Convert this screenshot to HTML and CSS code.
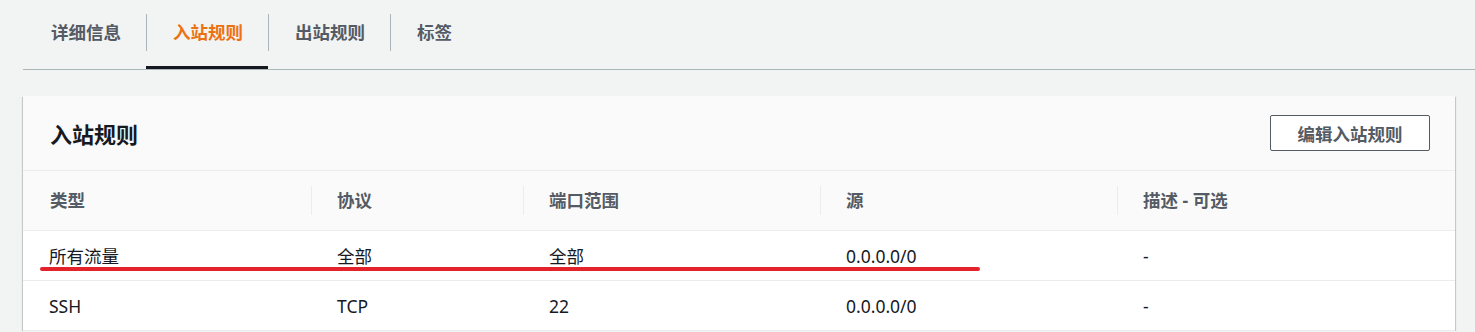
FILE: index.html
```html
<!DOCTYPE html>
<html lang="zh-CN">
<head>
    <meta charset="UTF-8">
    <meta name="viewport" content="width=device-width, initial-scale=1.0">
    <title>入站规则</title>
    <link rel="stylesheet" href="styles.css">
</head>
<body>
    <div class="tabs">
        <a class="tab"><span class="tab-label">详细信息</span></a>
        <a class="tab active"><span class="tab-label">入站规则</span></a>
        <a class="tab"><span class="tab-label">出站规则</span></a>
        <a class="tab"><span class="tab-label">标签</span></a>
    </div>

    <div class="card">
        <div class="card-header">
            <h2>入站规则</h2>
            <button type="button">编辑入站规则</button>
        </div>

        <table class="rules">
            <colgroup>
                <col style="width: 288px">
                <col style="width: 212px">
                <col style="width: 297px">
                <col style="width: 297px">
                <col>
            </colgroup>
            <thead>
                <tr>
                    <th><div class="th-inner first">类型</div></th>
                    <th><div class="th-inner">协议</div></th>
                    <th><div class="th-inner">端口范围</div></th>
                    <th><div class="th-inner">源</div></th>
                    <th><div class="th-inner">描述 - 可选</div></th>
                </tr>
            </thead>
            <tbody>
                <tr>
                    <td class="first">所有流量</td>
                    <td>全部</td>
                    <td>全部</td>
                    <td>0.0.0.0/0</td>
                    <td>-</td>
                </tr>
                <tr>
                    <td class="first">SSH</td>
                    <td>TCP</td>
                    <td>22</td>
                    <td>0.0.0.0/0</td>
                    <td>-</td>
                </tr>
            </tbody>
        </table>

        <!-- marca vermelha desenhada por cima da primeira linha -->
        <div class="mark"></div>
    </div>
</body>
</html>
```

FILE: styles.css
```css
body {
    font-family: "Noto Sans", "Noto Sans CJK SC", sans-serif;
    background-color: #f2f3f3;
    margin: 0;
    padding: 0 0 0 23px;
    color: #16191f;
    font-size: 17.5px;
}
.tabs {
    display: flex;
    padding-left: 3px;
    border-bottom: 1px solid #aab7b8;
}
.tab {
    display: block;
    box-sizing: border-box;
    height: 69px;
    padding-top: 14px;
    border-bottom: 3px solid transparent;
    color: #545b64;
    font-weight: bold;
    cursor: pointer;
}
.tab-label {
    display: block;
    height: 37px;
    line-height: 37px;
    padding: 0 25px 0 26px;
    border-left: 1px solid #aab7b8;
}
.tab:first-child .tab-label {
    border-left: none;
    padding-left: 25px;
}
.tab.active {
    color: #ec7211;
    border-bottom-color: #16191f;
}
.card {
    position: relative;
    margin: 26px 20px 0 0;
    background: #fff;
    box-shadow: 0 1px 1px 0 rgba(0, 28, 36, 0.3), 1px 1px 1px 0 rgba(0, 28, 36, 0.15), -1px 1px 1px 0 rgba(0, 28, 36, 0.15);
}
.card-header {
    display: flex;
    align-items: center;
    justify-content: space-between;
    height: 74px;
    padding: 0 25px 0 27px;
    background: #fafafa;
    border-bottom: 1px solid #eaeded;
}
.card-header h2 {
    margin: 0;
    font-size: 22px;
    font-weight: bold;
    color: #16191f;
}
.card-header button {
    width: 160px;
    height: 36px;
    background: #fff;
    border: 1px solid #545b64;
    border-radius: 2px;
    color: #545b64;
    font-family: inherit;
    font-size: 17.5px;
    font-weight: bold;
    padding: 0;
    cursor: pointer;
}
.rules {
    width: 100%;
    table-layout: fixed;
    border-collapse: collapse;
}
.rules th {
    background: #fafafa;
    height: 59px;
    padding: 0;
    text-align: left;
    color: #545b64;
    font-weight: bold;
    border-bottom: 1px solid #eaeded;
}
.th-inner {
    height: 29px;
    line-height: 29px;
    padding-left: 25px;
    border-left: 1px solid #eaeded;
}
.th-inner.first {
    border-left: none;
    padding-left: 27px;
}
.rules td {
    height: 49px;
    padding: 0 0 0 26px;
    border-bottom: 1px solid #eaeded;
    white-space: nowrap;
}
.rules td.first {
    padding-left: 26px;
}
.mark {
    position: absolute;
    left: 17px;
    top: 171px;
    width: 940px;
    height: 4px;
    border-radius: 2px;
    background: #e4222a;
}
```
